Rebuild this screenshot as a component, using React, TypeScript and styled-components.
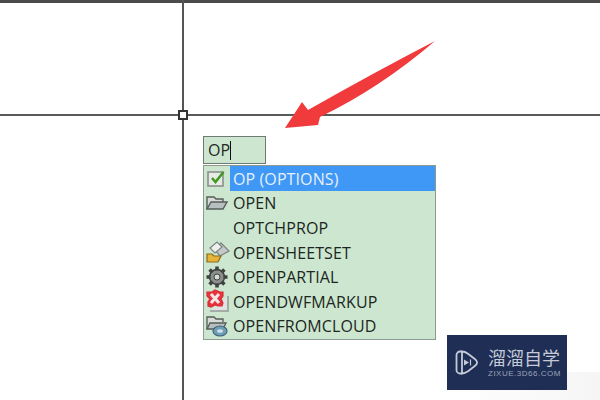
import React from 'react'
import styled, { createGlobalStyle } from 'styled-components'

const GlobalStyle = createGlobalStyle`
  html, body {
    margin: 0;
    padding: 0;
    background: #ffffff;
  }
`

const Canvas = styled.div`
  position: relative;
  box-sizing: border-box;
  width: 600px;
  height: 400px;
  overflow: hidden;
  padding: 136px 0 0 203px;
  background: #ffffff;
  font-family: "Open Sans", "Liberation Sans", sans-serif;
`

const TopEdge = styled.div`
  position: absolute;
  top: 0;
  left: 0;
  right: 0;
  height: 3px;
  background: #4b4b4b;
`

const VerticalLine = styled.div`
  position: absolute;
  top: 0;
  left: 182px;
  width: 2px;
  height: 400px;
  background: #555555;
`

const HorizontalLine = styled.div`
  position: absolute;
  top: 114px;
  left: 0;
  width: 600px;
  height: 2px;
  background: #5a5a5a;
`

const Pickbox = styled.div`
  position: absolute;
  top: 110px;
  left: 178px;
  box-sizing: border-box;
  width: 10px;
  height: 10px;
  background: #ffffff;
  border: 2px solid #333333;
`

const ArrowMark = styled.svg`
  position: absolute;
  top: 0;
  left: 0;
`

const Smudge = styled.div`
  position: absolute;
  left: 480px;
  top: 372px;
  width: 120px;
  height: 28px;
  background: linear-gradient(90deg, #fdfcfc 0%, #f8f8f8 70%, #f5f5f5 100%);
`

const CommandInput = styled.div`
  display: flex;
  align-items: center;
  box-sizing: border-box;
  width: 63px;
  height: 28px;
  padding-left: 4px;
  background: #cde6d0;
  border: 1px solid #6f7a72;
  color: #1f2a22;
  font-size: 16px;
`

const Caret = styled.span`
  display: inline-block;
  width: 1px;
  height: 19px;
  background: #111111;
`

const Suggestions = styled.ul`
  box-sizing: border-box;
  width: 233px;
  height: 175px;
  margin: 1px 0 0;
  padding: 0;
  list-style: none;
  background: #cde6d0;
  border: 1px solid #8c9a90;
`

const Row = styled.li`
  display: flex;
  align-items: center;
  height: 24.6px;
`

const IconSlot = styled.span`
  display: flex;
  align-items: center;
  justify-content: center;
  flex: none;
  width: 26px;
  height: 100%;
  filter: blur(0.35px);
`

const Label = styled.span<{ $active?: boolean }>`
  display: flex;
  align-items: center;
  flex: 1;
  height: 100%;
  padding: 1px 0 0 3px;
  font-size: 16px;
  letter-spacing: 0.1px;
  color: ${p => (p.$active ? '#e6f1fb' : '#1c2620')};
  background: ${p => (p.$active ? '#3f97f6' : 'transparent')};
`

const Watermark = styled.div`
  position: absolute;
  left: 447px;
  top: 335px;
  display: flex;
  align-items: center;
  gap: 9px;
  box-sizing: border-box;
  width: 120px;
  height: 55px;
  padding-left: 8px;
  background: #1f2e55;
`

const BrandText = styled.div`
  display: flex;
  flex-direction: column;
  flex: none;
  gap: 1px;
`

const BrandName = styled.span`
  font-family: "Noto Sans CJK SC", sans-serif;
  font-size: 18px;
  line-height: 21px;
  white-space: nowrap;
  color: #c4cad6;
`

const BrandUrl = styled.span`
  font-family: "Liberation Sans", sans-serif;
  font-size: 8px;
  line-height: 9px;
  letter-spacing: 0.5px;
  white-space: nowrap;
  color: #9aa3b6;
`

const CheckIcon = () => (
  <svg width="22" height="20" viewBox="0 0 22 20">
    <rect x="2" y="4" width="15" height="14" fill="#e6ebe6" stroke="#8a8f8c" strokeWidth="1.6" />
    <path d="M6 10l3.5 4 8-10" fill="none" stroke="#3f9a1e" strokeWidth="2.6" />
  </svg>
)

const FolderIcon = () => (
  <svg width="24" height="18" viewBox="0 0 24 18">
    <path d="M2 15V3h7l2 2h7v3" fill="#d8dcd8" stroke="#555c58" strokeWidth="1.4" />
    <path d="M2 15l4-7h16l-4 7z" fill="#b8bfc0" stroke="#555c58" strokeWidth="1.4" />
  </svg>
)

const SheetSetIcon = () => (
  <svg width="26" height="24" viewBox="0 0 26 24">
    <path d="M11 10l6-7 8 8-9 5z" fill="#c4c9c8" stroke="#7c8480" strokeWidth="1.2" />
    <path d="M6 8l7-6 5 5-7 6z" fill="#eef0ee" stroke="#7c8480" strokeWidth="1.2" />
    <path d="M3 22v-8h5l2 2h7l-3 6z" fill="#e6b437" stroke="#8a6a1e" strokeWidth="1.2" />
  </svg>
)

const GearIcon = () => (
  <svg width="24" height="24" viewBox="0 0 24 24">
    <circle cx="12" cy="12" r="7.5" fill="#8a8f8c" stroke="#3e4240" strokeWidth="1.4" />
    <g stroke="#3e4240" strokeWidth="3.6">
      <path d="M12 1.5v4M12 18.5v4M1.5 12h4M18.5 12h4M4.6 4.6l2.8 2.8M16.6 16.6l2.8 2.8M4.6 19.4l2.8-2.8M16.6 7.4l2.8-2.8" />
    </g>
    <circle cx="12" cy="12" r="3" fill="#d7dcd8" stroke="#3e4240" strokeWidth="1" />
  </svg>
)

const MarkupIcon = () => (
  <svg width="24" height="24" viewBox="0 0 24 24">
    <path d="M5 22h18V7" fill="#dfe4e2" stroke="#a4acaa" strokeWidth="2" />
    <path d="M2 3l5 0 3-2 5 2 3 0 0 4-2 3 2 4-1 3-4 0-3-1-4 2-3-1 0-4 2-3-3-3z" fill="#e8333d" stroke="#d92c36" strokeWidth="1.2" />
    <path d="M6 5l8 9M14 5l-8 9" stroke="#f6e6e6" strokeWidth="3" />
  </svg>
)

const CloudFolderIcon = () => (
  <svg width="26" height="24" viewBox="0 0 26 24">
    <path d="M3 15V3h7l2 2h7v3" fill="#d8dcd8" stroke="#555c58" strokeWidth="1.3" />
    <path d="M3 15l3-6h16l-3 6z" fill="#b8bfc0" stroke="#555c58" strokeWidth="1.3" />
    <ellipse cx="16" cy="17" rx="7" ry="5" fill="#6f9fb8" stroke="#3f6478" strokeWidth="1.2" />
    <ellipse cx="16" cy="17" rx="3" ry="1.8" fill="#cfe0e6" />
  </svg>
)

const PlayLogo = () => (
  <svg width="24" height="25" viewBox="0 0 24 25" style={{ flex: 'none' }}>
    <path d="M7 1.5H5a3.5 3.5 0 0 0-3.5 3.5v15a3.5 3.5 0 0 0 3.5 3.5h2" fill="none" stroke="#c4cad6" strokeWidth="1.8" />
    <path d="M7 1.5c2.5 0 4 .8 6 2.2l6.5 5c3.5 2.6 3.5 5 0 7.6l-6.5 5c-2 1.4-3.5 2.2-6 2.2z" fill="none" stroke="#c4cad6" strokeWidth="1.8" />
    <path d="M9 9.5l5 3-5 3z" fill="#c4cad6" />
    <path d="M15.5 9.5v6" stroke="#c4cad6" strokeWidth="1.2" />
  </svg>
)

const items = [
  { label: 'OP (OPTIONS)', icon: <CheckIcon />, active: true },
  { label: 'OPEN', icon: <FolderIcon /> },
  { label: 'OPTCHPROP', icon: null },
  { label: 'OPENSHEETSET', icon: <SheetSetIcon /> },
  { label: 'OPENPARTIAL', icon: <GearIcon /> },
  { label: 'OPENDWFMARKUP', icon: <MarkupIcon /> },
  { label: 'OPENFROMCLOUD', icon: <CloudFolderIcon /> },
]

export default function App(): JSX.Element {
  return (
    <Canvas>
      <GlobalStyle />
      <TopEdge />
      <VerticalLine />
      <HorizontalLine />
      <Pickbox />
      <Smudge />
      <ArrowMark width="600" height="400" viewBox="0 0 600 400">
        <path d="M435 41Q375 72 308 110L302 102L285 128L318 125L320 117Q380 88 435 41Z" fill="#f03a3c" />
      </ArrowMark>
      <CommandInput>
        OP
        <Caret />
      </CommandInput>
      <Suggestions>
        {items.map(item => (
          <Row key={item.label}>
            <IconSlot>{item.icon}</IconSlot>
            <Label $active={item.active}>{item.label}</Label>
          </Row>
        ))}
      </Suggestions>
      <Watermark>
        <PlayLogo />
        <BrandText>
          <BrandName>溜溜自学</BrandName>
          <BrandUrl>ZIXUE.3D66.COM</BrandUrl>
        </BrandText>
      </Watermark>
    </Canvas>
  )
}
